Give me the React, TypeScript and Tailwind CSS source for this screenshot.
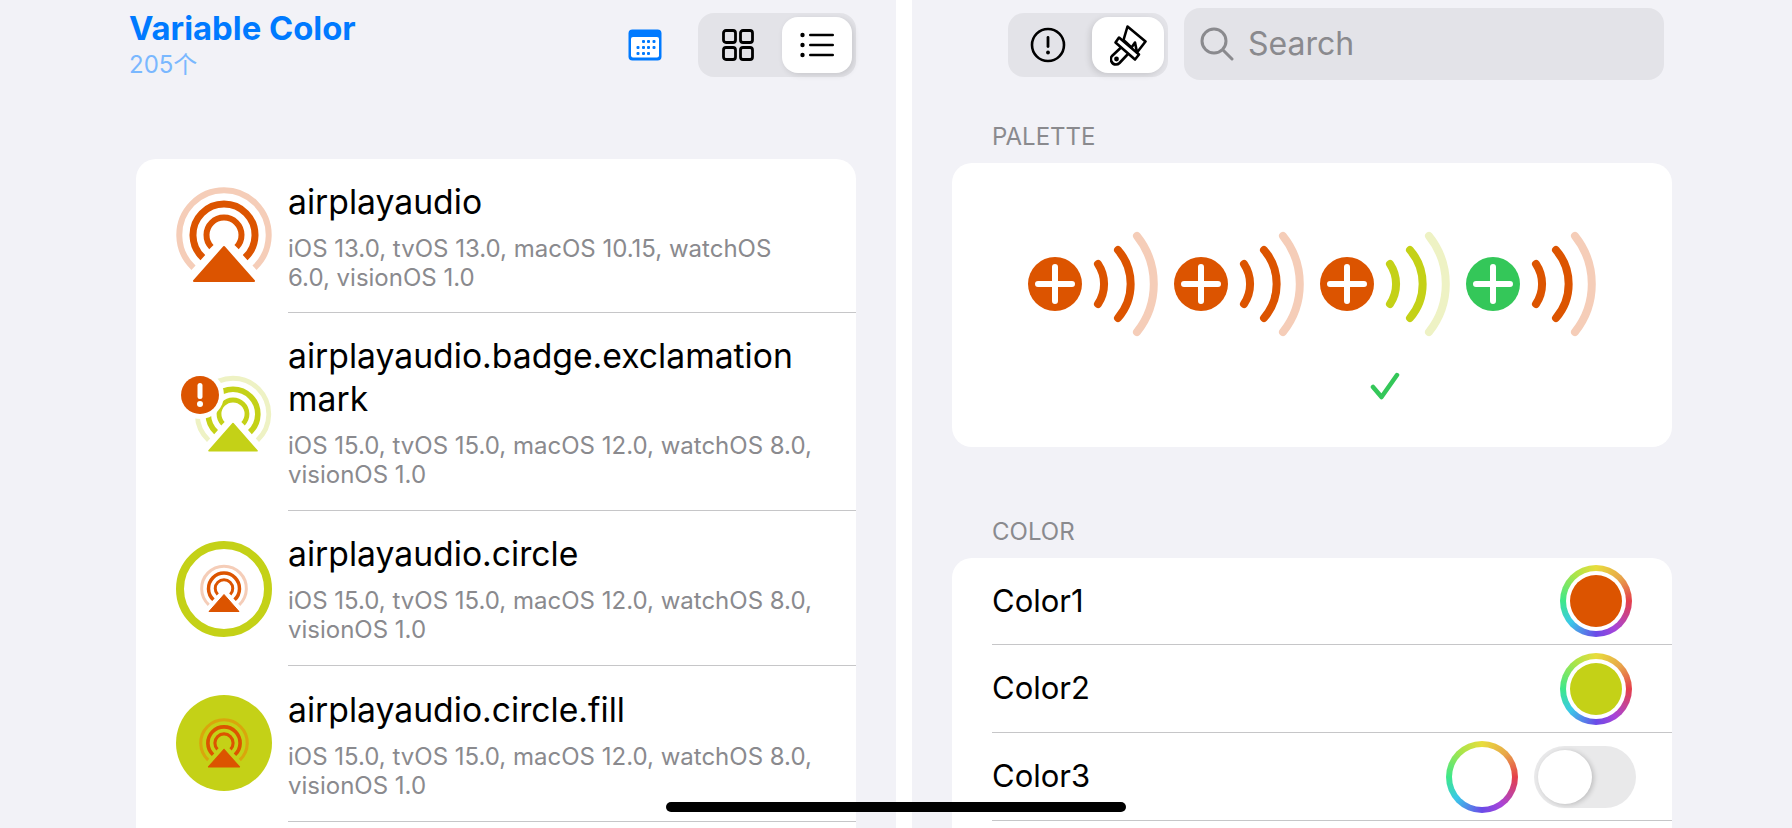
import type { ReactNode } from "react";

const ORANGE = "#dc5400";
const LIME = "#c4d117";
const PEACH = "#f5cdb8";

// arc open at the bottom, a = degrees below the horizontal at both ends
function arc(cx: number, cy: number, r: number, a: number) {
  const rad = (a * Math.PI) / 180;
  const dx = r * Math.cos(rad);
  const dy = r * Math.sin(rad);
  return `M ${cx - dx} ${cy + dy} A ${r} ${r} 0 1 1 ${cx + dx} ${cy + dy}`;
}

function Airplay({
  cx,
  cy,
  k,
  main,
  soft,
}: {
  cx: number;
  cy: number;
  k: number;
  main: string;
  soft: string;
}) {
  return (
    <g>
      <path d={arc(cx, cy, 44.7 * k, 47)} fill="none" stroke={soft} strokeWidth={6 * k} />
      <path d={arc(cx, cy, 31 * k, 47)} fill="none" stroke={main} strokeWidth={7 * k} />
      <path d={arc(cx, cy, 17.5 * k, 44)} fill="none" stroke={main} strokeWidth={6 * k} />
      <path
        d={`M ${cx} ${cy + 12 * k} L ${cx + 30 * k} ${cy + 46 * k} L ${cx - 30 * k} ${cy + 46 * k} Z`}
        fill={main}
        stroke={main}
        strokeWidth={2 * k}
        strokeLinejoin="round"
      />
    </g>
  );
}

function RowIcon({ kind }: { kind: number }) {
  return (
    <svg width="104" height="104" viewBox="0 0 104 104" className="shrink-0">
      {kind === 0 && <Airplay cx={52} cy={51} k={1} main={ORANGE} soft={PEACH} />}
      {kind === 1 && (
        <g>
          <Airplay cx={61} cy={54} k={0.8} main={LIME} soft="#eef2c4" />
          <circle cx={28} cy={35} r={24} fill="white" />
          <circle cx={28} cy={35} r={19} fill={ORANGE} />
          <rect x={25.5} y={23} width={5} height={16} rx={2.5} fill="white" />
          <circle cx={28} cy={44} r={3} fill="white" />
        </g>
      )}
      {kind === 2 && (
        <g>
          <circle cx={52} cy={52} r={44} fill="none" stroke={LIME} strokeWidth={8} />
          <Airplay cx={52} cy={51.5} k={0.5} main={ORANGE} soft={PEACH} />
        </g>
      )}
      {kind === 3 && (
        <g>
          <circle cx={52} cy={51} r={48} fill={LIME} />
          <Airplay cx={52} cy={51} k={0.52} main={ORANGE} soft="#d9a60c" />
        </g>
      )}
    </svg>
  );
}

const rows = [
  {
    name: ["airplayaudio"],
    os: ["iOS 13.0, tvOS 13.0, macOS 10.15, watchOS", "6.0, visionOS 1.0"],
    icon: 0,
    rowHeight: "h-[154px]",
  },
  {
    name: ["airplayaudio.badge.exclamation", "mark"],
    os: ["iOS 15.0, tvOS 15.0, macOS 12.0, watchOS 8.0,", "visionOS 1.0"],
    icon: 1,
    rowHeight: "h-[198px]",
  },
  {
    name: ["airplayaudio.circle"],
    os: ["iOS 15.0, tvOS 15.0, macOS 12.0, watchOS 8.0,", "visionOS 1.0"],
    icon: 2,
    rowHeight: "h-[155px]",
  },
  {
    name: ["airplayaudio.circle.fill"],
    os: ["iOS 15.0, tvOS 15.0, macOS 12.0, watchOS 8.0,", "visionOS 1.0"],
    icon: 3,
    rowHeight: "h-[156px]",
  },
];

function SymbolRow({ row }: { row: (typeof rows)[number] }) {
  return (
    <div className={`flex items-center pl-[36px] ${row.rowHeight}`}>
      <RowIcon kind={row.icon} />
      <div className="ml-[12px] flex h-full flex-1 flex-col justify-center border-b border-[#c6c6c8]">
        <div className="text-[33.7px] leading-[43px] text-black">
          {row.name.map((line) => (
            <div key={line}>{line}</div>
          ))}
        </div>
        <div className="mt-[11px] text-[24px] leading-[29px] text-[#8a8a8e]">
          {row.os.map((line) => (
            <div key={line}>{line}</div>
          ))}
        </div>
      </div>
    </div>
  );
}

function WaveGroup({ dot, near, far }: { dot: string; near: string; far: string }) {
  return (
    <svg width="146" height="110" viewBox="0 0 146 110" className="shrink-0">
      <circle cx={27} cy={55} r={27} fill={dot} />
      <path d="M27 38 V72 M10 55 H44" stroke="white" strokeWidth={6} strokeLinecap="round" />
      <path d="M70 35 A36 36 0 0 1 70 75" fill="none" stroke={near} strokeWidth={8} strokeLinecap="round" />
      <path d="M90 21 A52 52 0 0 1 90 89" fill="none" stroke={near} strokeWidth={8} strokeLinecap="round" />
      <path d="M109 7 A77 77 0 0 1 109 103" fill="none" stroke={far} strokeWidth={8} strokeLinecap="round" />
    </svg>
  );
}

function ColorWell({ fill }: { fill?: string }) {
  return (
    <div className="flex h-[72px] w-[72px] items-center justify-center rounded-full bg-[conic-gradient(#e8dd3c,#e8a84a_45deg,#e5404a_90deg,#a844d8_145deg,#6a4be8_180deg,#3ac8e8_230deg,#3ee88a_270deg,#a8e54a_320deg,#e8dd3c)]">
      <div className="flex h-[60px] w-[60px] items-center justify-center rounded-full bg-white">
        {fill === "orange" && <div className="h-[52px] w-[52px] rounded-full bg-[#dc5400]" />}
        {fill === "lime" && <div className="h-[52px] w-[52px] rounded-full bg-[#c4d117]" />}
      </div>
    </div>
  );
}

function ColorRow({ label, children }: { label: string; children: ReactNode }) {
  return (
    <div className="flex h-[88px] items-center border-b border-[#c6c6c8] pr-[40px] text-[31px] text-black first:h-[87px]">
      <span className="flex-1">{label}</span>
      {children}
    </div>
  );
}

export default function App() {
  return (
    <div className="relative flex h-[828px] w-[1792px] overflow-hidden bg-white font-['Inter','Noto_Sans_CJK_SC',sans-serif]">
      {/* left column */}
      <div className="flex w-[896px] flex-col bg-[#f2f2f7] pr-[40px]">
        <div className="flex h-[159px] shrink-0 items-start">
          <div className="ml-[129px] pt-[7px]">
            <div className="text-[32.8px] font-bold leading-[42px] text-[#007aff]">Variable Color</div>
            <div className="mt-[3px] text-[24px] leading-[26px] text-[#7ab8ff]">205个</div>
          </div>
          <div className="ml-auto mt-[13px] flex items-center">
            <svg width="34" height="32" viewBox="0 0 34 32" className="mr-[36px]">
              <rect x="0.5" y="0.5" width="33" height="31" rx="4" fill="#007aff" />
              <rect x="3" y="8" width="28" height="20.5" rx="2" fill="white" />
              <g fill="#007aff">
                <rect x="14" y="11" width="3" height="3" rx="1" />
                <rect x="19" y="11" width="3" height="3" rx="1" />
                <rect x="24.5" y="11" width="3" height="3" rx="1" />
                <rect x="8.5" y="17" width="3" height="3" rx="1" />
                <rect x="14" y="17" width="3" height="3" rx="1" />
                <rect x="19" y="17" width="3" height="3" rx="1" />
                <rect x="24.5" y="17" width="3" height="3" rx="1" />
                <rect x="8.5" y="23" width="3" height="3" rx="1" />
                <rect x="14" y="23" width="3" height="3" rx="1" />
                <rect x="19" y="23" width="3" height="3" rx="1" />
              </g>
            </svg>
            <div className="flex h-[64px] w-[158px] items-center rounded-[16px] bg-[#e3e3e8] p-[4px]">
              <div className="flex flex-1 justify-center pr-[8px]">
                <svg width="32" height="32" viewBox="0 0 32 32" fill="none" stroke="black" strokeWidth="2.8">
                  <rect x="1.5" y="1.5" width="12" height="12" rx="2.5" />
                  <rect x="18.5" y="1.5" width="12" height="12" rx="2.5" />
                  <rect x="1.5" y="18.5" width="12" height="12" rx="2.5" />
                  <rect x="18.5" y="18.5" width="12" height="12" rx="2.5" />
                </svg>
              </div>
              <div className="flex h-[56px] w-[70px] items-center justify-center rounded-[16px] bg-white shadow-[2px_2px_6px_rgba(0,0,0,0.12)]">
                <svg width="34" height="26" viewBox="0 0 34 26">
                  <g fill="black">
                    <circle cx="2.5" cy="3" r="2.2" />
                    <circle cx="2.5" cy="13" r="2.2" />
                    <circle cx="2.5" cy="23" r="2.2" />
                    <rect x="9" y="1.7" width="25" height="2.6" rx="1.3" />
                    <rect x="9" y="11.7" width="25" height="2.6" rx="1.3" />
                    <rect x="9" y="21.7" width="25" height="2.6" rx="1.3" />
                  </g>
                </svg>
              </div>
            </div>
          </div>
        </div>
        <div className="ml-[136px] flex-1 overflow-hidden rounded-t-[20px] bg-white">
          {rows.map((row) => (
            <SymbolRow key={row.icon} row={row} />
          ))}
        </div>
      </div>

      <div className="w-[16px]" />

      {/* right column */}
      <div className="flex flex-1 flex-col bg-[#f2f2f7] pl-[40px] pr-[120px]">
        <div className="flex h-[88px] shrink-0 items-start">
          <div className="ml-[56px] mt-[13px] flex h-[64px] w-[160px] items-center rounded-[16px] bg-[#e3e3e8] p-[4px]">
            <div className="flex flex-1 justify-center pr-[8px]">
              <svg width="36" height="36" viewBox="0 0 36 36" fill="none">
                <circle cx="18" cy="18" r="16" stroke="black" strokeWidth="2.6" />
                <rect x="16.6" y="9" width="2.8" height="12" rx="1.4" fill="black" />
                <circle cx="18" cy="25.5" r="1.9" fill="black" />
              </svg>
            </div>
            <div className="flex h-[56px] w-[72px] items-center justify-center rounded-[16px] bg-white shadow-[-2px_2px_6px_rgba(0,0,0,0.12)]">
              <svg width="37" height="41" viewBox="0 0 37 41" fill="none" stroke="black" strokeWidth="2.6" strokeLinejoin="round" strokeLinecap="round">
                <path d="M17.5 1.5 L35.5 16.5 L27 27.5 L25 17.5 L21.5 22.5 L13.5 15 Z" />
                <path d="M9 12.5 L29 29.5 L25 34.5 L5.5 17.5 Z" />
                <path d="M10.5 23 L2 31 C-0.5 34 1.5 39.5 6 39.5 C7.5 39.5 8.5 39 9.5 38 L17.5 29.5" />
                <circle cx="6.5" cy="34" r="1.1" fill="black" />
              </svg>
            </div>
          </div>
          <div className="ml-[16px] mt-[8px] flex h-[72px] w-[480px] items-center rounded-[16px] bg-[#e3e3e8] pl-[16px] text-[32px] text-[#8a8a8e]">
            <svg width="34" height="34" viewBox="0 0 34 34" fill="none" stroke="#8a8a8e" strokeWidth="3" strokeLinecap="round">
              <circle cx="14" cy="14" r="12" />
              <path d="M23 23 L32 32" />
            </svg>
            <span className="ml-[14px]">Search</span>
          </div>
        </div>

        <div className="h-[75px] shrink-0 pl-[40px] pt-[36px] text-[24px] leading-[26px] text-[#8a8a8e]">PALETTE</div>
        <div className="flex h-[284px] shrink-0 flex-col items-center rounded-[20px] bg-white pt-[66px]">
          <div className="ml-[16px] flex w-[584px]">
            <WaveGroup dot={ORANGE} near={ORANGE} far={PEACH} />
            <WaveGroup dot={ORANGE} near={ORANGE} far={PEACH} />
            <WaveGroup dot={ORANGE} near={LIME} far="#eef2c4" />
            <WaveGroup dot="#34c759" near={ORANGE} far={PEACH} />
          </div>
          <svg width="30" height="28" viewBox="0 0 30 28" fill="none" stroke="#34c759" strokeWidth="4.5" strokeLinecap="round" strokeLinejoin="round" className="ml-[146px] mt-[33px]">
            <path d="M3 15 L11.5 25 L27 3" />
          </svg>
        </div>
        <div className="h-[111px] shrink-0 pl-[40px] pt-[72px] text-[24px] leading-[26px] text-[#8a8a8e]">COLOR</div>
        <div className="flex-1 rounded-t-[20px] bg-white pl-[40px]">
          <ColorRow label="Color1">
            <ColorWell fill="orange" />
          </ColorRow>
          <ColorRow label="Color2">
            <ColorWell fill="lime" />
          </ColorRow>
          <ColorRow label="Color3">
            <ColorWell />
            <div className="ml-[16px] mr-[-4px] flex h-[62px] w-[102px] items-center rounded-full bg-[#e9e9ea] p-[4px]">
              <div className="h-[54px] w-[54px] rounded-full bg-white shadow-[2px_1px_5px_rgba(0,0,0,0.18)]" />
            </div>
          </ColorRow>
        </div>
      </div>

      {/* home indicator */}
      <div className="absolute left-[666px] top-[802px] h-[10px] w-[460px] rounded-full bg-black" />
    </div>
  );
}
